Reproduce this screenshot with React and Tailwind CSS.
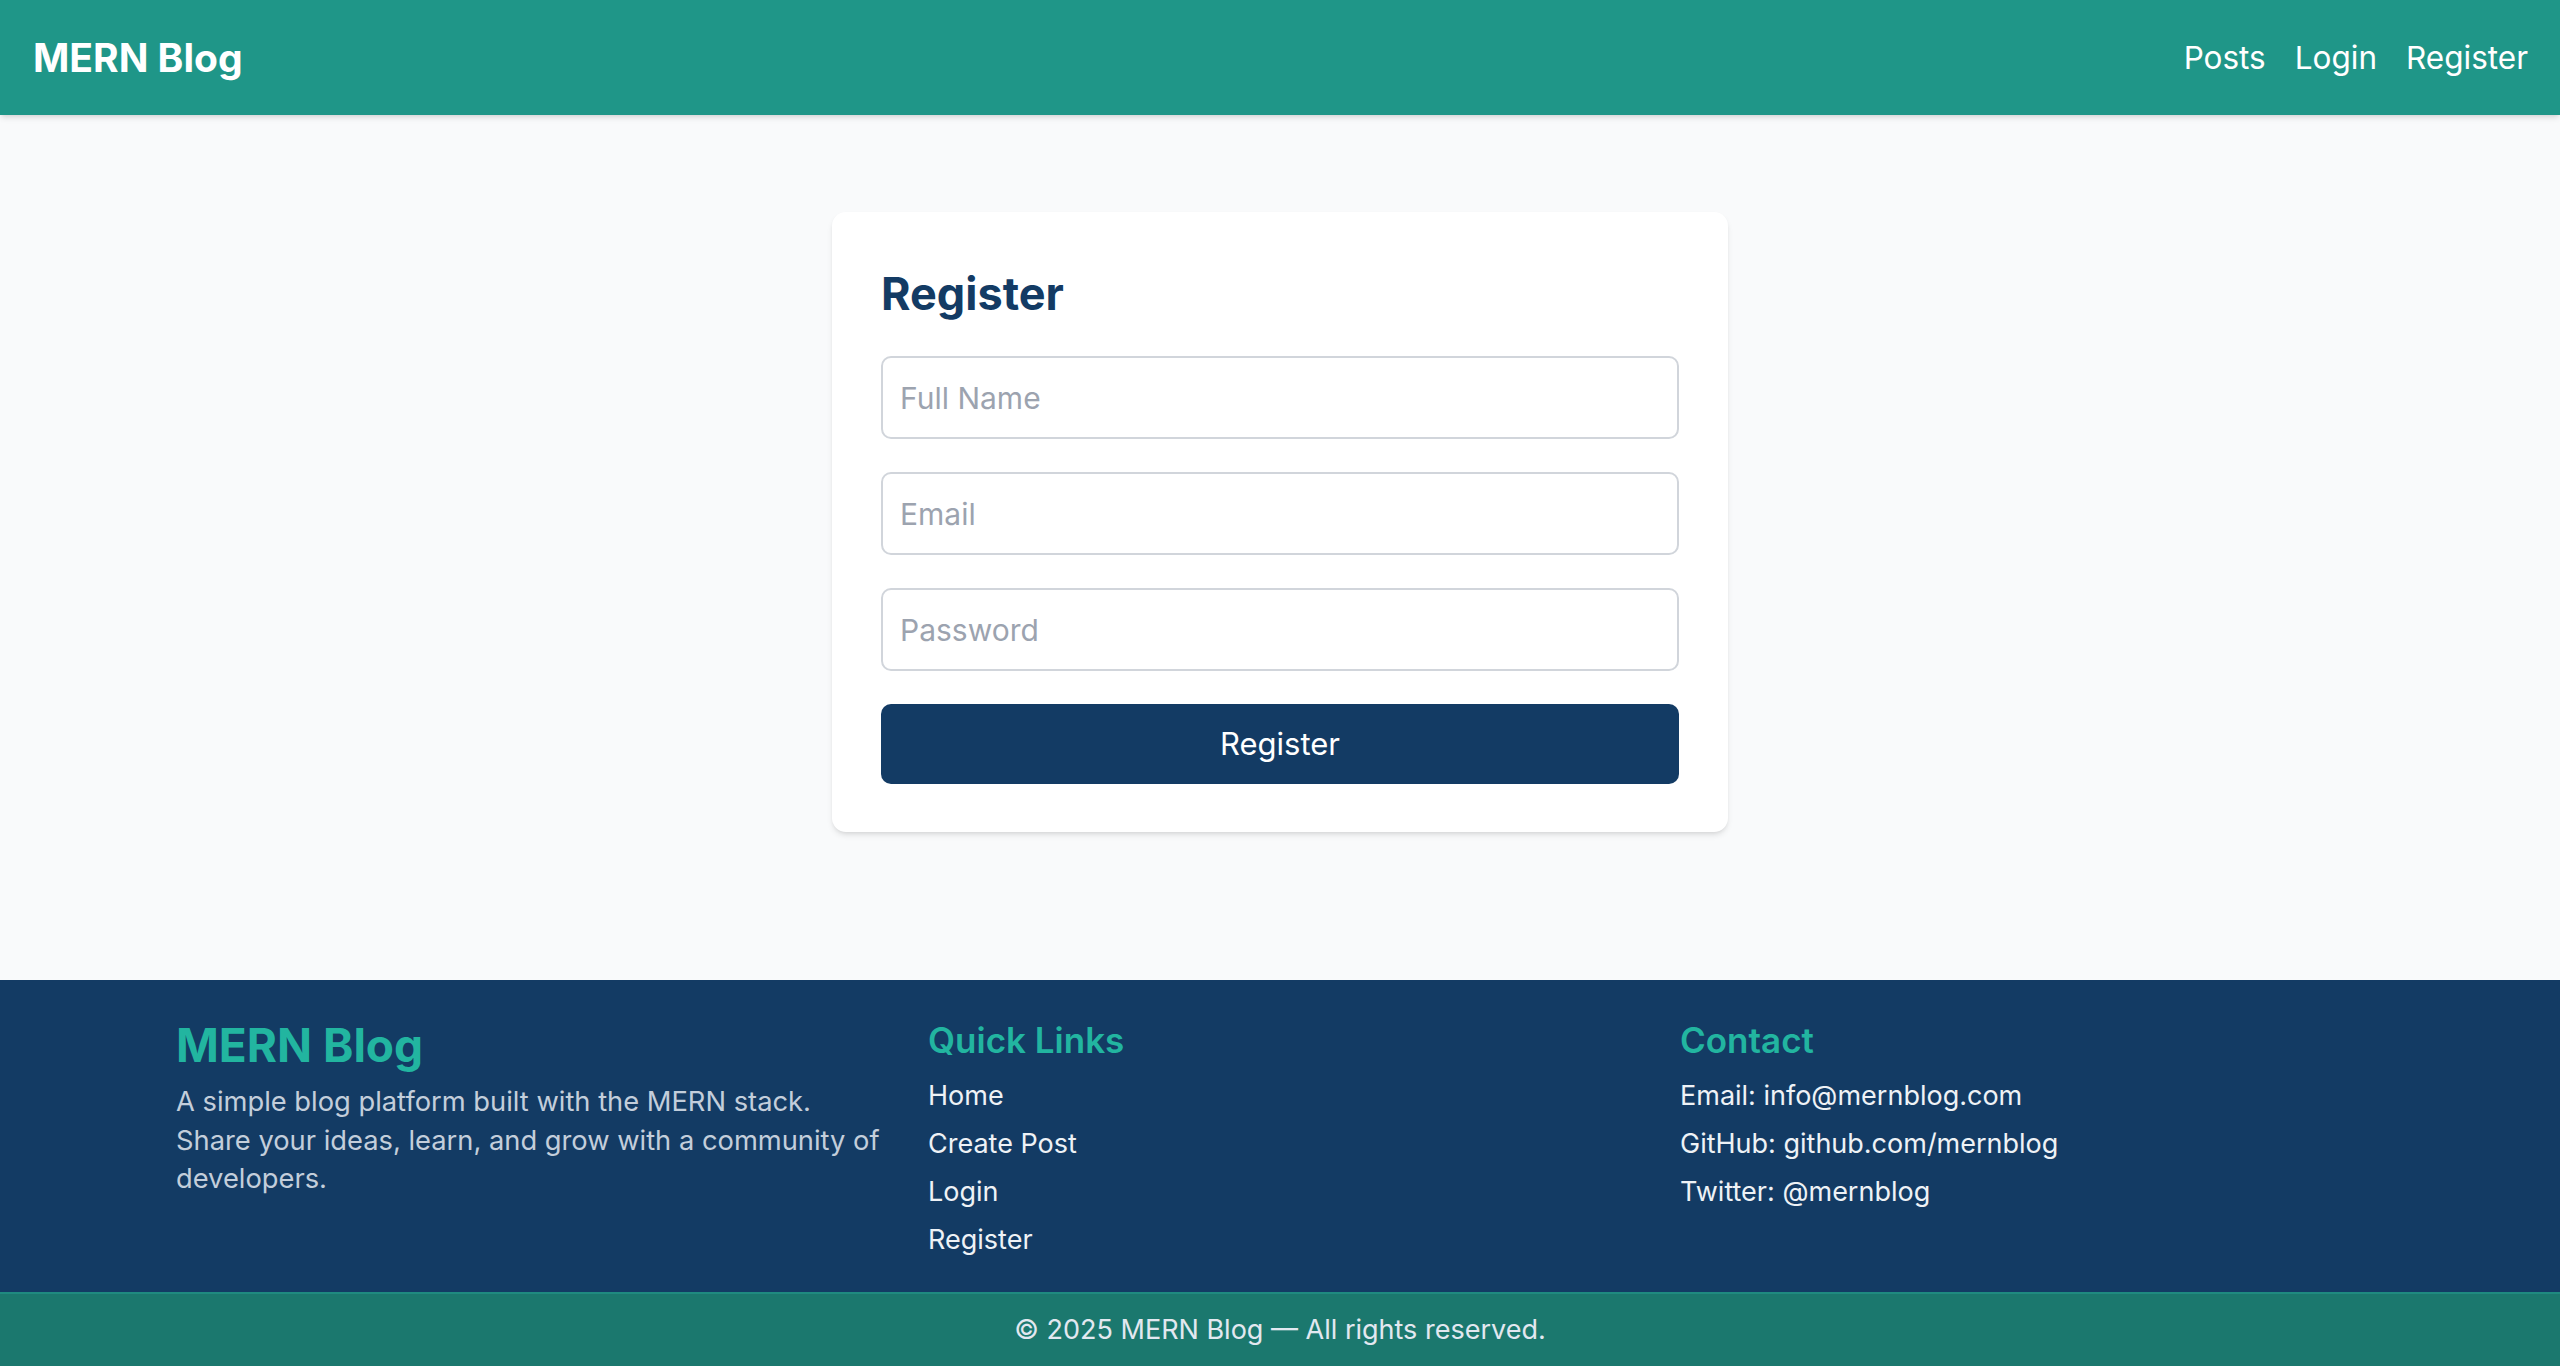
export default function App() {
  return (
    <div className="min-h-screen flex flex-col bg-[#f9fafb] font-['Inter',sans-serif]">
      {/* Navbar */}
      <header className="relative z-10 h-[115px] bg-[#1f9688] shadow-md flex items-center justify-between pl-[33px] pr-[32px]">
        <a href="#" className="text-white text-[39px] font-bold leading-none">
          MERN Blog
        </a>
        <nav className="flex items-center gap-[29px] text-white text-[31.5px] leading-none">
          <a href="#">Posts</a>
          <a href="#">Login</a>
          <a href="#">Register</a>
        </nav>
      </header>

      {/* Register card */}
      <main className="flex-1 pt-[97px]">
        <div className="w-[896px] mx-auto bg-white rounded-[14px] shadow-md px-[49px] pt-[54px] pb-[48px]">
          <h2 className="text-[45px] leading-[56px] font-bold text-[#133b64] mb-[34px]">
            Register
          </h2>
          <form className="flex flex-col gap-[33px]" onSubmit={(e) => e.preventDefault()}>
            <input
              type="text"
              placeholder="Full Name"
              className="h-[83px] w-full border-2 border-[#d1d5db] rounded-[10px] px-[17px] text-[30px] text-gray-800 placeholder:text-[#9ca3af] outline-none"
            />
            <input
              type="email"
              placeholder="Email"
              className="h-[83px] w-full border-2 border-[#d1d5db] rounded-[10px] px-[17px] text-[30px] text-gray-800 placeholder:text-[#9ca3af] outline-none"
            />
            <input
              type="password"
              placeholder="Password"
              className="h-[83px] w-full border-2 border-[#d1d5db] rounded-[10px] px-[17px] text-[30px] text-gray-800 placeholder:text-[#9ca3af] outline-none"
            />
            <button
              type="submit"
              className="h-[80px] w-full bg-[#133b64] text-white text-[31px] rounded-[10px]"
            >
              Register
            </button>
          </form>
        </div>
      </main>

      {/* Footer */}
      <footer>
        <div className="bg-[#133b64] px-[176px] pt-[37px] pb-[32px] grid grid-cols-3 gap-x-[48px]">
          <div>
            <h3 className="text-[46px] leading-[56px] font-bold text-[#22b5a0]">MERN Blog</h3>
            <p className="mt-[10px] text-[27.3px] leading-[38.7px] text-[#c3cedb]">
              A simple blog platform built with the MERN stack. Share your ideas, learn, and grow
              with a community of developers.
            </p>
          </div>
          <div>
            <h4 className="text-[35px] leading-[46px] font-semibold text-[#22b5a0]">Quick Links</h4>
            <ul className="mt-[13px] flex flex-col gap-[8px] text-[27px] leading-[40px] text-[#eef2f6]">
              <li><a href="#">Home</a></li>
              <li><a href="#">Create Post</a></li>
              <li><a href="#">Login</a></li>
              <li><a href="#">Register</a></li>
            </ul>
          </div>
          <div>
            <h4 className="text-[35px] leading-[46px] font-semibold text-[#22b5a0]">Contact</h4>
            <ul className="mt-[13px] flex flex-col gap-[8px] text-[27px] leading-[40px] text-[#eef2f6]">
              <li>Email: info@mernblog.com</li>
              <li>GitHub: github.com/mernblog</li>
              <li>Twitter: @mernblog</li>
            </ul>
          </div>
        </div>
        <div className="h-[74px] bg-[#1b786e] border-t-2 border-[#1f8a80] flex items-center justify-center text-[27px] text-[#e2e8f0]">
          © 2025 MERN Blog — All rights reserved.
        </div>
      </footer>
    </div>
  );
}
